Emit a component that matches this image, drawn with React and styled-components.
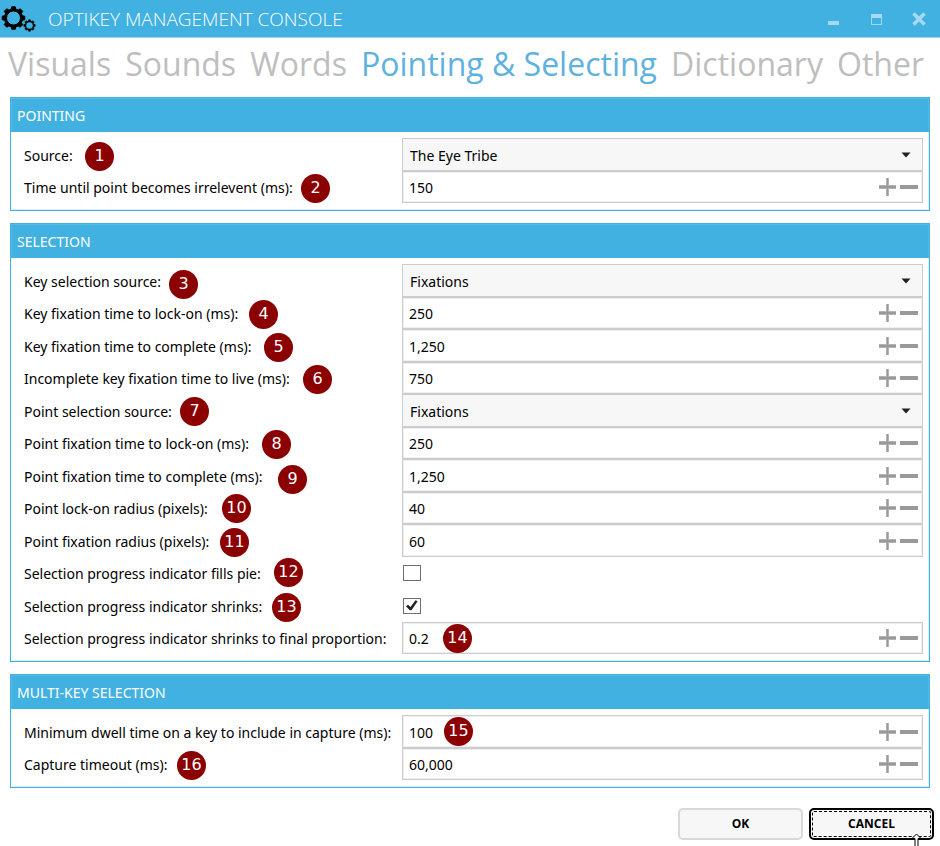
import React, { useState } from "react";
import styled, { createGlobalStyle, css } from "styled-components";

const accent = "#41b1e1";
const edge = "#cccccc";

const GlobalStyle = createGlobalStyle`
  * { box-sizing: border-box; }
  body {
    margin: 0;
    background: #ffffff;
    color: #000000;
    font: 14px/20px "Noto Sans", "Open Sans", sans-serif;
  }
  button, input, select { font: inherit; color: inherit; }
`;

const Window = styled.div`
  position: relative;
  display: flex;
  flex-direction: column;
  min-height: 100vh;
  overflow: hidden;
`;

const TitleBar = styled.header`
  display: flex;
  align-items: center;
  height: 38px;
  padding: 0 8px 0 1px;
  background: ${accent};
  border-bottom: 1px solid #a0d8f0;
`;

const Title = styled.h1`
  flex: 1;
  margin: 0 0 0 11px;
  color: #ffffff;
  font-family: "Open Sans", sans-serif;
  font-size: 19px;
  font-weight: 300;
  line-height: 36px;
`;

const Caption = styled.div`
  display: flex;
  gap: 17px;
`;

const CaptionButton = styled.button`
  display: grid;
  place-items: center;
  width: 26px;
  height: 34px;
  padding: 0;
  border: 0;
  background: transparent;
  color: #a6daf1;
`;

const Tabs = styled.nav`
  display: flex;
  justify-content: space-between;
  padding: 2px 16px 0 8px;
  height: 59px;
`;

const Tab = styled.a`
  color: ${(p) => (p.$active ? "#5fb1e0" : "#bebebe")};
  font-family: "Open Sans", sans-serif;
  font-size: 32px;
  line-height: 48px;
  text-decoration: none;
  white-space: nowrap;
`;

const Main = styled.main`
  display: grid;
  gap: 12px;
  padding: 0 10px;
`;

const Panel = styled.section`
  position: relative;
  border: 1px solid ${accent};
  box-shadow: inset -1px -1px 0 #d9eff9;
`;

const PanelTitle = styled.h2`
  margin: 0;
  height: 34px;
  padding: 0 5px;
  background: ${accent};
  border: 1px solid #56b9e4;
  border-width: 1px 1px 2px;
  border-bottom-color: ${accent};
  color: #ffffff;
  font-size: 14px;
  font-weight: 400;
  line-height: 34px;
`;

const Rows = styled.div`
  padding: 6px 6px 7px 13px;
`;

const Row = styled.div`
  display: grid;
  grid-template-columns: 378px 1fr;
  align-items: center;
  height: 33px;
  &:nth-child(even) { height: 32px; }
`;

const Label = styled.label`
  padding-top: 2px;
  white-space: nowrap;
`;

const Field = styled.div`
  position: relative;
  display: flex;
  align-items: center;
  height: 100%;
  border: 1px solid ${edge};
  background: ${(p) => (p.$filled ? "#f7f7f7" : "#ffffff")};
  box-shadow: ${(p) => (p.$filled ? "none" : "inset 0 0 0 1px #efefef")};
`;

const ValueInput = styled.input`
  flex: 1;
  min-width: 0;
  padding: 2px 0 0 6px;
  border: 0;
  outline: 0;
  background: transparent;
`;

const Choice = styled.select`
  width: 100%;
  height: 100%;
  padding: 2px 24px 0 7px;
  border: 0;
  outline: 0;
  appearance: none;
  background: transparent;
`;

const Arrow = styled.svg`
  position: absolute;
  right: 11px;
  pointer-events: none;
`;

const Step = styled.button`
  display: grid;
  place-items: center;
  width: 22px;
  height: 24px;
  padding: 0;
  border: 0;
  background: transparent;
`;

const Steps = styled.div`
  display: flex;
  padding-right: 2px;
`;

const Tick = styled.input`
  appearance: none;
  width: 18px;
  height: 16px;
  margin: 0 0 0 1px;
  border: 1px solid #6f6f6f;
  background: #ffffff;
  grid-area: 1 / 1;
`;

const TickBox = styled.span`
  display: grid;
  justify-content: start;
  align-items: center;
  svg {
    grid-area: 1 / 1;
    margin-left: 4px;
    pointer-events: none;
  }
`;

const Pin = styled.span`
  position: absolute;
  left: ${(p) => p.$x}px;
  top: ${(p) => p.$y}px;
  width: 29px;
  height: 29px;
  border-radius: 50%;
  background: #8b0000;
  color: #ffffff;
  font: 16px/28px "DejaVu Sans", sans-serif;
  text-align: center;
`;

const Footer = styled.footer`
  display: flex;
  justify-content: flex-end;
  gap: 6px;
  padding: 20px 6px 6px;
`;

const Action = styled.button`
  width: 125px;
  height: 32px;
  padding: 0;
  border: 2px solid #d9d9d9;
  border-radius: 5px;
  background: #f7f7f7;
  font-family: "Open Sans", sans-serif;
  font-size: 12px;
  font-weight: 700;
  ${(p) =>
    p.$focused &&
    css`
      border-color: #000000;
      outline: 1px dashed #000000;
      outline-offset: -4px;
    `}
`;

const Cursor = styled.svg`
  position: absolute;
  right: 17px;
  bottom: 0;
  pointer-events: none;
`;

function gearPath(cx, cy, outer, inner, teeth) {
  const step = (Math.PI * 2) / teeth;
  const points = [];
  for (let i = 0; i < teeth; i += 1) {
    const a = i * step - Math.PI / 2;
    [
      [inner, -0.32],
      [outer, -0.2],
      [outer, 0.2],
      [inner, 0.32],
    ].forEach(([r, t]) => {
      points.push(`${(cx + r * Math.cos(a + t * step)).toFixed(2)} ${(cy + r * Math.sin(a + t * step)).toFixed(2)}`);
    });
  }
  return `M${points.join("L")}Z`;
}

function hole(cx, cy, r) {
  return `M${cx - r} ${cy}a${r} ${r} 0 1 0 ${2 * r} 0a${r} ${r} 0 1 0 ${-2 * r} 0Z`;
}

function Gears() {
  return (
    <svg width="36" height="28" viewBox="0 0 36 28" fill="#000" fillRule="evenodd" aria-hidden="true">
      <path d={gearPath(12.5, 13, 11.4, 9.2, 8) + hole(12.5, 13, 7)} stroke="#000" strokeLinejoin="round" />
      <path d={gearPath(28.5, 20.5, 5.8, 4.6, 8) + hole(28.5, 20.5, 3.6)} stroke="#000" strokeWidth="0.5" strokeLinejoin="round" />
    </svg>
  );
}

function SelectRow({ id, label, value }) {
  return (
    <Row>
      <Label htmlFor={id}>{label}</Label>
      <Field $filled>
        <Choice id={id} defaultValue={value}>
          <option>{value}</option>
        </Choice>
        <Arrow width="10" height="6" viewBox="0 0 10 6" aria-hidden="true">
          <path d="M0.500 0.500h9L5 5.500z" fill="#222" />
        </Arrow>
      </Field>
    </Row>
  );
}

function NumberRow({ id, label, value }) {
  return (
    <Row>
      <Label htmlFor={id}>{label}</Label>
      <Field>
        <ValueInput id={id} defaultValue={value} />
        <Steps>
          <Step aria-label={`Increase ${label}`}>
            <svg width="18" height="18" viewBox="0 0 18 18" fill="#999">
              <path d="M8 0h3v18h-3zM1 7h17v4H1z" fill="#b4b4b4" />
              <path d="M9 0h1v18h-1zM1 8h17v2H1z" />
            </svg>
          </Step>
          <Step aria-label={`Decrease ${label}`}>
            <svg width="18" height="18" viewBox="0 0 18 18">
              <path d="M0 7h18v4H0z" fill="#999" />
            </svg>
          </Step>
        </Steps>
      </Field>
    </Row>
  );
}

function CheckRow({ id, label, value }) {
  const [on, setOn] = useState(value);
  return (
    <Row>
      <Label htmlFor={id}>{label}</Label>
      <TickBox>
        <Tick id={id} type="checkbox" checked={on} onChange={(e) => setOn(e.target.checked)} />
        {on && (
          <svg width="12" height="11" viewBox="0 0 12 11" aria-hidden="true">
            <path d="M0 6.200L2 4.700L4.500 7L9.500 0.300L11.600 1.300L5.500 10.300H3.800Z" fill="#222" />
          </svg>
        )}
      </TickBox>
    </Row>
  );
}

const rowKinds = { select: SelectRow, number: NumberRow, check: CheckRow };

const tabs = ["Visuals", "Sounds", "Words", "Pointing & Selecting", "Dictionary", "Other"];

const panels = [
  {
    title: "POINTING",
    rows: [
      ["select", "Source:", "The Eye Tribe"],
      ["number", "Time until point becomes irrelevent (ms):", "150"],
    ],
    pins: [[1, 74, 44], [2, 290, 76]],
  },
  {
    title: "SELECTION",
    rows: [
      ["select", "Key selection source:", "Fixations"],
      ["number", "Key fixation time to lock-on (ms):", "250"],
      ["number", "Key fixation time to complete (ms):", "1,250"],
      ["number", "Incomplete key fixation time to live (ms):", "750"],
      ["select", "Point selection source:", "Fixations"],
      ["number", "Point fixation time to lock-on (ms):", "250"],
      ["number", "Point fixation time to complete (ms):", "1,250"],
      ["number", "Point lock-on radius (pixels):", "40"],
      ["number", "Point fixation radius (pixels):", "60"],
      ["check", "Selection progress indicator fills pie:", false],
      ["check", "Selection progress indicator shrinks:", true],
      ["number", "Selection progress indicator shrinks to final proportion:", "0.2"],
    ],
    pins: [
      [3, 158, 46], [4, 238, 76], [5, 253, 109], [6, 292, 141],
      [7, 169, 173], [8, 251, 206], [9, 267, 241], [10, 211, 270],
      [11, 209, 304], [12, 263, 334], [13, 261, 369], [14, 432, 400],
    ],
  },
  {
    title: "MULTI-KEY SELECTION",
    rows: [
      ["number", "Minimum dwell time on a key to include in capture (ms):", "100"],
      ["number", "Capture timeout (ms):", "60,000"],
    ],
    pins: [[15, 433, 42], [16, 166, 76]],
  },
];

export default function App() {
  return (
    <Window>
      <GlobalStyle />
      <TitleBar>
        <Gears />
        <Title>OPTIKEY MANAGEMENT CONSOLE</Title>
        <Caption>
          <CaptionButton aria-label="Minimize">
            <svg width="12" height="12" viewBox="0 0 12 12" fill="currentColor">
              <path d="M1 8h11v4H1z" />
            </svg>
          </CaptionButton>
          <CaptionButton aria-label="Maximize">
            <svg width="12" height="12" viewBox="0 0 12 12" fill="currentColor" fillRule="evenodd">
              <path d="M1 1h11v11H1zM2 5v6h9V5z" />
            </svg>
          </CaptionButton>
          <CaptionButton aria-label="Close">
            <svg width="14" height="14" viewBox="0 0 14 14" stroke="currentColor" strokeWidth="3.500">
              <path d="M1.500 1.500L12.500 12.500M12.500 1.500L1.500 12.500" />
            </svg>
          </CaptionButton>
        </Caption>
      </TitleBar>
      <Tabs>
        {tabs.map((name, i) => (
          <Tab key={name} href="#" $active={i === 3}>{name}</Tab>
        ))}
      </Tabs>
      <Main>
        {panels.map((panel, p) => (
          <Panel key={panel.title}>
            <PanelTitle>{panel.title}</PanelTitle>
            <Rows>
              {panel.rows.map(([kind, label, value], r) => {
                const Kind = rowKinds[kind];
                return <Kind key={label} id={`field-${p}-${r}`} label={label} value={value} />;
              })}
            </Rows>
            {panel.pins.map(([n, x, y]) => (
              <Pin key={n} $x={x} $y={y}>{n}</Pin>
            ))}
          </Panel>
        ))}
      </Main>
      <Footer>
        <Action>OK</Action>
        <Action $focused>CANCEL</Action>
      </Footer>
      <Cursor width="13" height="13" viewBox="0 0 13 13" aria-hidden="true">
        <path d="M6.500 1L11 5.500H8V14H5V5.500H2Z" fill="#fff" stroke="#000" />
      </Cursor>
    </Window>
  );
}
